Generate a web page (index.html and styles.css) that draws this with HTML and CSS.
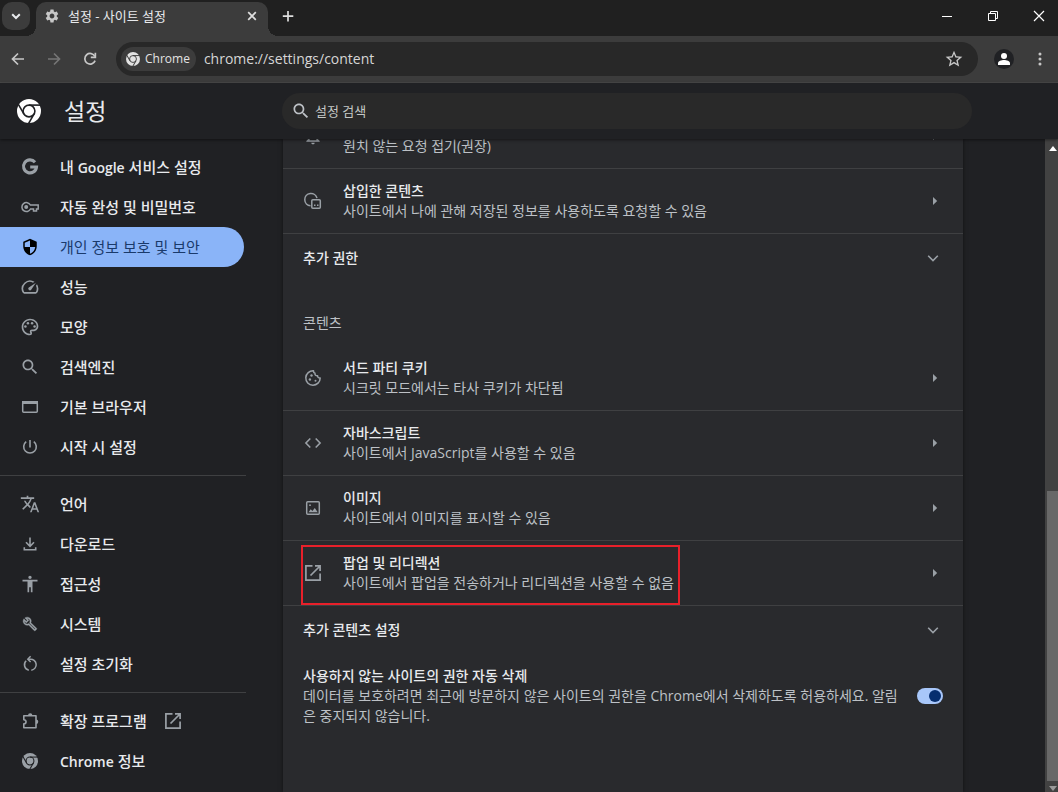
FILE: index.html
```html
<!DOCTYPE html>
<html lang="ko">
<head>
<meta charset="utf-8">
<meta name="viewport" content="width=device-width, initial-scale=1">
<title>설정 - 사이트 설정</title>
<link rel="stylesheet" href="styles.css">
</head>
<body>
<svg class="sprite" aria-hidden="true">
  <symbol id="chrome" viewBox="0 0 24 24">
    <circle cx="12" cy="12" r="12" fill="currentColor"/>
    <g fill="none" class="cut">
      <circle cx="12" cy="12" r="5.9"/>
      <path d="M12 6.1H24"/>
      <path d="M12 6.1H24" transform="rotate(120 12 12)"/>
      <path d="M12 6.1H24" transform="rotate(240 12 12)"/>
    </g>
  </symbol>
  <symbol id="open" viewBox="0 0 20 20">
    <path fill="none" stroke="currentColor" stroke-width="1.7" d="M9.5 2.9H2.9v14.2h14.2v-6.6M12 2.9h5.1V8M17 3 7.500 12.500"/>
  </symbol>
  <symbol id="search" viewBox="0 0 24 24">
    <path fill="currentColor" d="M15.500 14h-.79l-.28-.27C15.410 12.590 16 11.110 16 9.500 16 5.910 13.090 3 9.500 3S3 5.910 3 9.500 5.910 16 9.500 16c1.610 0 3.090-.59 4.230-1.570l.27.28v.79l5 4.990L20.490 19l-4.990-5zm-6 0C7.010 14 5 11.990 5 9.500S7.010 5 9.500 5 14 7.010 14 9.500 11.990 14 9.500 14z"/>
  </symbol>
  <symbol id="down" viewBox="0 0 20 20">
    <path fill="none" stroke="currentColor" stroke-width="1.6" d="m5.200 7.700 4.800 4.800 4.800-4.800"/>
  </symbol>
  <symbol id="next" viewBox="0 0 20 20"><path fill="currentColor" d="M10 6v8l4.200-4z"/></symbol>
</svg>

<div class="tabstrip">
  <button class="tab-search" aria-label="탭 검색"><svg viewBox="0 0 16 16"><path fill="none" stroke="currentColor" stroke-width="2" d="m4.200 6.200 3.800 3.800 3.800-3.800"/></svg></button>
  <div class="tab">
    <svg class="gear" viewBox="0 0 24 24"><path fill="currentColor" d="M19.140 12.940c.04-.3.06-.61.06-.94 0-.32-.02-.64-.07-.94l2.030-1.580c.18-.14.23-.41.12-.61l-1.920-3.320c-.12-.22-.37-.29-.59-.22l-2.390.96c-.5-.38-1.030-.7-1.620-.94l-.36-2.540c-.04-.24-.24-.41-.48-.41h-3.840c-.24 0-.43.17-.47.41l-.36 2.540c-.59.24-1.130.57-1.620.94l-2.390-.96c-.22-.08-.47 0-.59.22L2.740 8.870c-.12.21-.08.47.12.61l2.030 1.580c-.05.3-.09.63-.09.94s.02.64.07.94l-2.030 1.580c-.18.14-.23.41-.12.61l1.920 3.320c.12.22.37.29.59.22l2.390-.96c.5.38 1.030.7 1.620.94l.36 2.540c.05.24.24.41.48.41h3.840c.24 0 .44-.17.47-.41l.36-2.540c.59-.24 1.130-.56 1.620-.94l2.390.96c.22.08.47 0 .59-.22l1.920-3.320c.12-.22.07-.47-.12-.61l-2.010-1.580zM12 15.600c-1.980 0-3.600-1.620-3.600-3.600s1.620-3.600 3.600-3.600 3.600 1.620 3.600 3.600-1.620 3.600-3.600 3.600z"/></svg>
    <span class="tab-title">설정 - 사이트 설정</span>
    <button class="tab-close" aria-label="탭 닫기"><svg viewBox="0 0 16 16"><path fill="none" stroke="currentColor" stroke-width="1.7" d="m4.200 4.200 7.600 7.600m0-7.600-7.600 7.600"/></svg></button>
  </div>
  <button class="new-tab" aria-label="새 탭"><svg viewBox="0 0 16 16"><path fill="none" stroke="currentColor" stroke-width="1.700" d="M8 3v10.500M2.800 8.200h10.500"/></svg></button>
  <div class="window-buttons">
    <button aria-label="최소화"><svg viewBox="0 0 12 12"><path fill="none" stroke="currentColor" d="M1 6.500h10"/></svg></button>
    <button aria-label="이전 크기로 복원"><svg viewBox="0 0 12 12"><path fill="none" stroke="currentColor" d="M1.500 3.500h7v7h-7zM3.500 3.500v-2h7v7h-2"/></svg></button>
    <button aria-label="닫기"><svg viewBox="0 0 12 12"><path fill="none" stroke="currentColor" stroke-width="1.200" d="m1 1 10 10M11 1 1 11"/></svg></button>
  </div>
</div>

<div class="toolbar">
  <div class="nav-buttons">
    <button aria-label="뒤로"><svg viewBox="0 0 20 20"><path fill="none" stroke="currentColor" stroke-width="1.700" d="M16 10H5M10 4.500 4.500 10l5.500 5.500"/></svg></button>
    <button aria-label="앞으로" disabled><svg viewBox="0 0 20 20"><path fill="none" stroke="currentColor" stroke-width="1.700" d="M4 10h11M10 4.500l5.500 5.500-5.500 5.500"/></svg></button>
    <button aria-label="새로고침"><svg viewBox="0 0 20 20"><path fill="none" stroke="currentColor" stroke-width="1.700" d="M14.900 7.500A5.300 5.300 0 1 0 15.100 11.600"/><path fill="currentColor" d="M16.200 3.800v5.400h-5.400V7.500h3.700V3.800z"/></svg></button>
  </div>
  <div class="omnibox">
    <button class="chip"><svg><use href="#chrome"/></svg>Chrome</button>
    <input class="url" type="text" aria-label="주소창" value="chrome://settings/content">
    <button class="star" aria-label="북마크에 추가"><svg viewBox="0 0 24 24"><path fill="currentColor" d="m22 9.240-7.190-.62L12 2 9.190 8.630 2 9.240l5.460 4.730L5.820 21 12 17.270 18.180 21l-1.630-7.030L22 9.240zM12 15.400l-3.760 2.270 1-4.280-3.320-2.880 4.380-.38L12 6.100l1.710 4.040 4.380.38-3.320 2.880 1 4.280L12 15.400z"/></svg></button>
  </div>
  <div class="tool-buttons">
    <button aria-label="프로필"><svg viewBox="0 0 20 20"><circle cx="10" cy="10" r="10" fill="#202124"/><circle cx="10" cy="7" r="3" fill="#fff"/><path fill="#fff" d="M4 16v-1.800C4 12 7.500 11 10 11s6 1 6 3.200V16z"/></svg></button>
    <button aria-label="메뉴"><svg viewBox="0 0 20 20"><g fill="currentColor"><circle cx="10" cy="4.500" r="1.700"/><circle cx="10" cy="10" r="1.700"/><circle cx="10" cy="15.500" r="1.700"/></g></svg></button>
  </div>
</div>

<header class="header">
  <svg class="logo"><use href="#chrome"/></svg>
  <h1>설정</h1>
  <label class="search"><svg><use href="#search"/></svg><input type="search" aria-label="설정 검색" placeholder="설정 검색"></label>
</header>

<div class="page">
  <nav class="side" aria-label="설정">
    <a href="#"><svg viewBox="0 0 20 20"><path fill="none" stroke="currentColor" stroke-width="3.100" d="M15 5.200A6.500 6.500 0 1 0 16.500 10H10.200"/></svg><span>내 <b>Google</b> 서비스 설정</span></a>
    <a href="#"><svg viewBox="0 0 20 20"><g fill="none" stroke="currentColor" stroke-width="1.500"><path d="M10.400 8H18.200v4H16.500v2.100h-3V12h-3A4.500 4.500 0 1 1 10.400 8z"/></g><circle cx="6.200" cy="10" r="2" fill="currentColor"/></svg>자동 완성 및 비밀번호</a>
    <a href="#" class="active" aria-current="page"><svg viewBox="0 0 24 24"><path fill="currentColor" d="M12 1 3 5v6c0 5.550 3.840 10.740 9 12 5.160-1.260 9-6.450 9-12V5l-9-4zm0 10.990h7c-.53 4.120-3.280 7.790-7 8.940V12H5V6.300l7-3.110v8.800z"/></svg>개인 정보 보호 및 보안</a>
    <a href="#"><svg viewBox="0 0 24 24"><path fill="currentColor" d="m20.380 8.570-1.230 1.850a8 8 0 0 1-.22 7.580H5.070A8 8 0 0 1 15.580 6.850l1.850-1.230A10 10 0 0 0 3.350 19a2 2 0 0 0 1.720 1h13.850a2 2 0 0 0 1.740-1 10 10 0 0 0-.27-10.440zm-9.790 6.840a2 2 0 0 0 2.830 0l5.660-8.490-8.490 5.660a2 2 0 0 0 0 2.830z"/></svg>성능</a>
    <a href="#"><svg viewBox="0 0 24 24"><path fill="currentColor" d="M12 22C6.490 22 2 17.510 2 12S6.490 2 12 2s10 4.040 10 9c0 3.310-2.690 6-6 6h-1.770c-.28 0-.5.22-.5.5 0 .12.05.23.13.33.41.47.64 1.060.64 1.670A2.500 2.500 0 0 1 12 22zm0-18c-4.410 0-8 3.590-8 8s3.590 8 8 8c.28 0 .5-.22.5-.5a.54.54 0 0 0-.14-.35c-.41-.46-.63-1.050-.63-1.650a2.500 2.500 0 0 1 2.500-2.500H16c2.210 0 4-1.790 4-4 0-3.860-3.590-7-8-7z"/><g fill="currentColor"><circle cx="6.500" cy="11.500" r="1.500"/><circle cx="9.500" cy="7.500" r="1.500"/><circle cx="14.500" cy="7.500" r="1.500"/><circle cx="17.500" cy="11.500" r="1.500"/></g></svg>모양</a>
    <a href="#"><svg><use href="#search"/></svg>검색엔진</a>
    <a href="#"><svg viewBox="0 0 20 20"><rect x="2.700" y="4.700" width="14.600" height="10.600" rx="1" fill="none" stroke="currentColor" stroke-width="1.500"/><path fill="currentColor" d="M2 4h16v3H2z"/></svg>기본 브라우저</a>
    <a href="#"><svg viewBox="0 0 20 20"><path fill="none" stroke="currentColor" stroke-width="1.600" d="M10 3v7.500M6.200 4.700a6.300 6.300 0 1 0 7.600 0"/></svg>시작 시 설정</a>
    <hr>
    <a href="#"><svg viewBox="0 0 24 24"><path fill="currentColor" d="m12.870 15.070-2.540-2.510.03-.03A17.520 17.520 0 0 0 14.070 6H17V4h-7V2H8v2H1v1.990h11.170C11.500 7.920 10.440 9.750 9 11.350 8.070 10.320 7.300 9.190 6.690 8h-2c.73 1.630 1.730 3.170 2.980 4.560l-5.090 5.020L4 19l5-5 3.110 3.110.76-2.040zM18.500 10h-2L12 22h2l1.120-3h4.750L21 22h2l-4.500-12zm-2.620 7 1.620-4.330L19.120 17h-3.240z"/></svg>언어</a>
    <a href="#"><svg viewBox="0 0 20 20"><path fill="none" stroke="currentColor" stroke-width="1.600" d="M10 3.500V11.500M6 8.300l4 4 4-4M4.300 13.300v2.400h11.400v-2.400"/></svg>다운로드</a>
    <a href="#"><svg viewBox="0 0 24 24"><path fill="currentColor" d="M12 2c1.100 0 2 .9 2 2s-.9 2-2 2-2-.9-2-2 .9-2 2-2zm9 7h-6v13h-2v-6h-2v6H9V9H3V7h18v2z"/></svg>접근성</a>
    <a href="#"><svg viewBox="-4 -4 32 32"><path fill="currentColor" stroke="currentColor" stroke-width=".6" d="M22.610 18.990l-9.080-9.080c.93-2.340.45-5.100-1.440-7C9.790.61 6.210.4 3.660 2.260L7.500 6.110 6.080 7.520 2.250 3.690C.39 6.230.6 9.820 2.900 12.110c1.860 1.860 4.570 2.350 6.890 1.480l9.110 9.110c.39.39 1.020.39 1.410 0l2.300-2.300c.4-.38.4-1.010 0-1.410zm-3 1.600l-9.460-9.460c-.61.45-1.290.72-2 .82-1.360.2-2.790-.21-3.830-1.250C3.370 9.760 2.930 8.500 3 7.260l3.090 3.090 4.240-4.240-3.090-3.090c1.240-.07 2.490.37 3.440 1.310 1.080 1.080 1.490 2.570 1.240 3.960-.12.71-.42 1.370-.88 1.960l9.450 9.450-.88.89z"/></svg>시스템</a>
    <a href="#"><svg viewBox="0 0 20 20"><path fill="none" stroke="currentColor" stroke-width="1.500" d="M8.800 16.200A5.500 5.500 0 0 1 6.200 6.800M8 5.200h2a5.500 5.500 0 0 1 1.300 11"/><path fill="none" stroke="currentColor" stroke-width="1.500" d="M10.600 2.300 7.800 5.200l2.800 2.900"/></svg>설정 초기화</a>
    <hr>
    <a href="#"><svg viewBox="0 0 20 20"><path fill="none" stroke="currentColor" stroke-width="1.600" stroke-linejoin="round" d="M3.800 4.700H16v12.100H3.800v-3.900c3 0 3-4.200 0-4.200z"/><path fill="currentColor" d="M8 4.500a2.200 2.200 0 0 1 4.400 0zM16 8.400a2.300 2.300 0 0 1 0 4.600z"/></svg>확장 프로그램<svg class="external"><use href="#open"/></svg></a>
    <a href="#"><svg class="about"><use href="#chrome"/></svg><span><b>Chrome</b> 정보</span></a>
  </nav>

  <main class="main">
    <div class="card">
      <div class="scrolled">
        <a class="row peek" href="#">
          <span class="lead"><svg viewBox="0 0 24 24"><path fill="currentColor" d="M12 22c1.100 0 2-.9 2-2h-4c0 1.100.9 2 2 2zm6-6v-5c0-3.070-1.630-5.640-4.500-6.320V4a1.500 1.500 0 0 0-3 0v.68C7.640 5.360 6 7.920 6 11v5l-2 2v1h16v-1l-2-2zm-2 1H8v-6c0-2.480 1.510-4.500 4-4.500s4 2.020 4 4.500v6z"/></svg>
          <span class="text">원치 않는 요청 접기(권장)</span></span>
          <svg><use href="#next"/></svg>
        </a>
        <a class="row" href="#">
          <span class="lead"><svg viewBox="0 0 20 20"><g fill="none" stroke="currentColor" stroke-width="1.500"><path d="M7.500 14.800A6.200 6.200 0 1 1 14 7.200"/><rect x="8.800" y="8.800" width="8.500" height="8.500" rx="1"/></g><path fill="currentColor" d="M11 13.500h1.500V15H11zM14 13.500h1.500V15H14z"/></svg>
          <span class="text"><strong>삽입한 콘텐츠</strong><span>사이트에서 나에 관해 저장된 정보를 사용하도록 요청할 수 있음</span></span></span>
          <svg><use href="#next"/></svg>
        </a>
        <button class="row expand">추가 권한<svg><use href="#down"/></svg></button>
        <h2>콘텐츠</h2>
        <a class="row first" href="#">
          <span class="lead"><svg viewBox="0 0 20 20"><path fill="none" stroke="currentColor" stroke-width="1.500" stroke-linejoin="round" d="M10.500 2.800a7.200 7.200 0 1 0 6.700 7.200c-1.600.2-2.700-.8-2.600-2.300-1.700.3-2.900-.8-2.600-2.400-1-.3-1.600-1.200-1.500-2.500z"/><g fill="currentColor"><circle cx="8.500" cy="7.500" r="1.200"/><circle cx="6.900" cy="11.500" r="1.200"/><circle cx="12.500" cy="12.700" r="1"/></g></svg>
          <span class="text"><strong>서드 파티 쿠키</strong><span>시크릿 모드에서는 타사 쿠키가 차단됨</span></span></span>
          <svg><use href="#next"/></svg>
        </a>
        <a class="row" href="#">
          <span class="lead"><svg viewBox="0 0 20 20"><path fill="none" stroke="currentColor" stroke-width="1.600" d="M7.300 5.500 2.900 10l4.400 4.500M12.700 5.500l4.400 4.500-4.400 4.500"/></svg>
          <span class="text"><strong>자바스크립트</strong><span>사이트에서 JavaScript를 사용할 수 있음</span></span></span>
          <svg><use href="#next"/></svg>
        </a>
        <a class="row" href="#">
          <span class="lead"><svg viewBox="0 0 20 20"><rect x="3.700" y="3.700" width="12.600" height="12.600" rx="1" fill="none" stroke="currentColor" stroke-width="1.500"/><path fill="currentColor" d="m5.500 14.300 2.200-3 1.700 1.700 2.400-3 2.900 4.300z"/><circle cx="7" cy="7.200" r=".9" fill="currentColor"/></svg>
          <span class="text"><strong>이미지</strong><span>사이트에서 이미지를 표시할 수 있음</span></span></span>
          <svg><use href="#next"/></svg>
        </a>
        <a class="row" href="#">
          <span class="lead marked"><svg><use href="#open"/></svg>
          <span class="text"><strong>팝업 및 리디렉션</strong><span>사이트에서 팝업을 전송하거나 리디렉션을 사용할 수 없음</span></span></span>
          <svg><use href="#next"/></svg>
        </a>
        <button class="row expand">추가 콘텐츠 설정<svg><use href="#down"/></svg></button>
        <label class="toggle-row">
          <span class="text"><strong>사용하지 않는 사이트의 권한 자동 삭제</strong><span>데이터를 보호하려면 최근에 방문하지 않은 사이트의 권한을 Chrome에서 삭제하도록 허용하세요. 알림은 중지되지 않습니다.</span></span>
          <input class="toggle" type="checkbox" role="switch" checked>
        </label>
      </div>
    </div>
  </main>

  <div class="scrollbar" aria-hidden="true">
    <svg viewBox="0 0 8 5"><path fill="#fff" d="M0 5h8L4 0z"/></svg>
    <div class="thumb"></div>
    <svg viewBox="0 0 8 5"><path fill="#9a9a9a" d="M0 0h8L4 5z"/></svg>
  </div>
</div>
</body>
</html>
```

FILE: styles.css
```css
* { box-sizing: border-box; }

:root {
  --frame: #202020;
  --bar: #3c3c3c;
  --page: #202124;
  --card: #292a2d;
  --line: #3f4042;
  --text: #e8eaed;
  --muted: #bdc1c6;
  --icon: #9aa0a6;
}

body {
  margin: 0;
  height: 100vh;
  display: flex;
  flex-direction: column;
  overflow: hidden;
  background: var(--page);
  color: var(--text);
  font-family: "Open Sans", "Noto Sans CJK KR", sans-serif;
  font-size: 14px;
  line-height: 20px;
}

button, input { font: inherit; color: inherit; }
button { padding: 0; border: 0; background: none; }
a { color: inherit; text-decoration: none; }
svg { display: block; flex: none; width: 20px; height: 20px; }
.sprite { position: absolute; width: 0; height: 0; }
.cut { stroke: var(--cut, var(--page)); stroke-width: 1.6; }

/* Tab strip */
.tabstrip {
  display: flex;
  align-items: flex-start;
  flex: none;
  height: 36px;
  padding: 2px 0 0 2px;
  background: var(--frame);
}
.tab-search {
  display: grid;
  place-items: center;
  width: 28px;
  height: 28px;
  border-radius: 10px;
  background: var(--bar);
}
.tab-search svg { width: 16px; height: 16px; }
.tab {
  position: relative;
  display: flex;
  align-items: center;
  width: 232px;
  height: 34px;
  margin-left: 6px;
  padding: 0 8px 6px;
  border-radius: 10px 10px 0 0;
  background: var(--bar);
}
.tab::before, .tab::after {
  content: "";
  position: absolute;
  bottom: 0;
  width: 10px;
  height: 10px;
}
.tab::before { right: 100%; background: radial-gradient(circle at 0 0, transparent 10px, var(--bar) 10px); }
.tab::after { left: 100%; background: radial-gradient(circle at 100% 0, transparent 10px, var(--bar) 10px); }
.gear { width: 16px; height: 16px; color: #c7c7c7; }
.tab-title { flex: 1; margin-left: 8px; font-size: 13px; }
.tab-close svg, .new-tab svg { width: 16px; height: 16px; color: #dedede; }
.new-tab {
  display: grid;
  place-items: center;
  width: 28px;
  height: 28px;
  margin-left: 6px;
}
.window-buttons { display: flex; gap: 8px; margin-left: auto; color: #fff; }
.window-buttons button { display: grid; place-items: center; width: 38px; height: 28px; }
.window-buttons svg { width: 12px; height: 12px; }

/* Toolbar */
.toolbar {
  display: flex;
  align-items: center;
  gap: 12px;
  flex: none;
  height: 47px;
  padding: 0 4px;
  border-bottom: 1px solid #4a4a4a;
  background: var(--bar);
  color: #c7c7c7;
}
.nav-buttons, .tool-buttons { display: flex; gap: 8px; }
.nav-buttons button, .tool-buttons button { display: grid; place-items: center; width: 28px; height: 28px; }
.nav-buttons button:disabled { color: #757575; }
.tool-buttons button:last-child svg { width: 18px; height: 18px; }
.omnibox {
  display: flex;
  align-items: center;
  flex: 1;
  min-width: 0;
  height: 34px;
  padding: 0 14px 0 5px;
  border-radius: 17px;
  background: #282828;
}
.chip {
  --cut: var(--bar);
  display: flex;
  align-items: center;
  gap: 5px;
  height: 24px;
  padding: 0 6px 0 5px;
  border-radius: 12px;
  background: var(--bar);
  color: #e3e3e3;
  font-size: 12px;
}
.chip svg { width: 14px; height: 14px; }
.url {
  flex: 1;
  min-width: 0;
  padding: 0 8px;
  border: 0;
  outline: 0;
  background: none;
  color: #d6d6d6;
}
.star svg { width: 20px; height: 20px; }

/* Settings header */
.header {
  display: flex;
  align-items: center;
  flex: none;
  height: 56px;
  padding: 0 86px 0 17px;
  box-shadow: 0 1px 3px rgba(0, 0, 0, .5);
  position: relative;
  z-index: 1;
  background: var(--page);
}
.logo { width: 24px; height: 24px; color: #fff; }
h1 { width: 218px; margin: 0 0 0 23px; font-size: 23px; font-weight: 400; line-height: 32px; }
.search {
  display: flex;
  align-items: center;
  flex: 1;
  gap: 4px;
  height: 36px;
  padding: 0 9px;
  border-radius: 18px;
  background: #292929;
  color: var(--muted);
}
.search input {
  flex: 1;
  min-width: 0;
  padding: 0;
  border: 0;
  outline: 0;
  background: none;
  font-size: 13px;
}
.search input::placeholder { color: #c4c7c5; opacity: 1; }

/* Page body */
.page { display: flex; flex: 1; min-height: 0; }
.side { flex: none; width: 246px; padding-top: 8px; overflow: hidden; color: var(--icon); }
.side a {
  display: flex;
  align-items: center;
  gap: 20px;
  height: 40px;
  margin-right: 2px;
  padding-left: 20px;
  color: var(--text);
  font-size: 15px;
  font-weight: 500;
}
.side b { font-size: 14px; font-weight: 600; }
.side svg { color: var(--icon); }
.side hr { height: 1px; margin: 8px 0; border: 0; background: var(--line); }
.side .active { border-radius: 0 20px 20px 0; background: #8ab4f8; color: #1a3a6b; font-weight: 400; }
.side .active svg { width: 18px; height: 18px; margin: 0 1px; color: #000; }
.side .about { width: 16px; height: 16px; margin: 0 2px; }
.side .external { margin-left: -4px; }

.main { flex: 1; min-width: 0; padding: 0 82px 0 37px; overflow: hidden; }
.card { height: 100%; overflow: hidden; background: var(--card); box-shadow: 0 0 4px rgba(0, 0, 0, .5); }
.scrolled { margin-top: -36px; }
.row {
  display: flex;
  align-items: center;
  justify-content: space-between;
  width: 100%;
  height: 65px;
  padding: 0 20px;
  border-top: 1px solid var(--line);
}
.row svg { color: var(--icon); }
.first { height: 64px; border-top: 0; }
.peek .text { padding-top: 20px; }
.lead { display: flex; align-items: center; gap: 20px; }
.text { display: flex; flex-direction: column; color: var(--muted); }
.text strong { color: var(--text); font-weight: 500; }
.marked { position: relative; }
.marked::after {
  content: "";
  position: absolute;
  inset: -8px -6px -12px -2px;
  border: 2px solid #e8202a;
}
.expand { height: 49px; color: var(--text); font-weight: 500; }
h2 { margin: 0; padding: 31px 20px 13px; color: var(--muted); font-size: 14px; font-weight: 400; }
.toggle-row {
  display: flex;
  align-items: center;
  justify-content: space-between;
  gap: 10px;
  padding: 12px 20px;
}
.toggle {
  flex: none;
  appearance: none;
  width: 26px;
  height: 16px;
  margin: 0;
  padding: 2px;
  border-radius: 8px;
  background: #a8c7fa;
}
.toggle::before {
  content: "";
  display: block;
  width: 12px;
  height: 12px;
  margin-left: auto;
  border-radius: 50%;
  background: #062e6f;
}

/* Scrollbar */
.scrollbar {
  display: flex;
  flex-direction: column;
  align-items: center;
  flex: none;
  width: 13px;
  padding: 7px 0 1px 2px;
  background: #424242;
}
.scrollbar svg { width: 8px; height: 5px; }
.thumb { width: 100%; height: 45%; margin: auto 0 5px; background: #686868; }
```
